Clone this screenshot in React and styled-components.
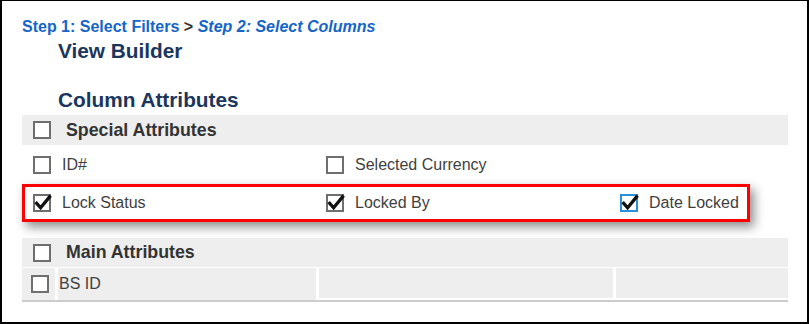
import styled, { createGlobalStyle } from "styled-components";

const GlobalStyle = createGlobalStyle`
  body {
    margin: 0;
    background: #fff;
    font-family: "Liberation Sans", Arial, sans-serif;
  }
`;

const Frame = styled.div`
  width: 809px;
  height: 324px;
  box-sizing: border-box;
  border: 2px solid #000;
  border-top-width: 1px;
  padding: 17px 0 0 20px;
  background: #fff;
`;

const Steps = styled.div`
  font-size: 16px;
  line-height: 18px;
  font-weight: bold;
  color: #1565c8;

  em {
    font-style: italic;
  }
`;

const Sep = styled.span`
  color: #333;
`;

const Heading = styled.div`
  margin: ${(p) => p.$top}px 0 0 36px;
  font-size: 20.8px;
  line-height: 24px;
  font-weight: bold;
  color: #1b365d;
`;

const Table = styled.div`
  width: 766px;
  margin-top: 3px;
`;

const Band = styled.div`
  display: flex;
  align-items: center;
  height: ${(p) => p.$h}px;
  padding-left: 11px;
  background: #eee;
`;

const BandLabel = styled.span`
  margin-left: 15px;
  font-size: 17.8px;
  font-weight: bold;
  color: #333;
`;

const Row = styled.div`
  display: grid;
  grid-template-columns: 293px 294px 1fr;
  height: 39px;
`;

const Highlight = styled(Row)`
  width: 728px;
  height: 38px;
  box-sizing: border-box;
  border: 3px solid #ff0000;
  box-shadow: 4px 5px 10px rgba(0, 0, 0, 0.45);
  margin-bottom: 16px;
`;

const Cell = styled.div`
  display: flex;
  align-items: center;
  gap: 11px;
  padding-left: ${(p) => p.$pad}px;
  font-size: 16px;
  color: #3f3f3f;
`;

const Box = styled.span`
  position: relative;
  flex-shrink: 0;
  width: 18px;
  height: 18px;
  box-sizing: border-box;
  border: 2px solid ${(p) => (p.$focus ? "#2b90d9" : "#6e6e6e")};
  background: #fff;

  svg {
    position: absolute;
    top: -2px;
    left: -2px;
  }
`;

const GridRow = styled.div`
  display: flex;
  align-items: flex-start;
  gap: 3px;
  margin-top: 1px;
  border-bottom: 2px solid #ccc;
`;

const GridCell = styled.div`
  display: flex;
  align-items: center;
  box-sizing: border-box;
  width: ${(p) => (p.$w ? `${p.$w}px` : "auto")};
  flex: ${(p) => (p.$w ? "none" : "1")};
  height: ${(p) => (p.$short ? 30 : 32)}px;
  padding-left: ${(p) => p.$pad || 0}px;
  background: #eee;
  font-size: 16px;
  color: #3f3f3f;
`;

const Checkbox = ({ checked, focus }) => (
  <Box $focus={focus}>
    {checked && (
      <svg width="21" height="20" viewBox="0 0 21 20">
        <path
          d="M2.6 8.2 L7.6 13.8 L17.6 1.6"
          fill="none"
          stroke="#111"
          strokeWidth="3.3"
          strokeLinejoin="miter"
        />
      </svg>
    )}
  </Box>
);

const Item = ({ label, checked, focus, pad = 11 }) => (
  <Cell $pad={pad}>
    <Checkbox checked={checked} focus={focus} />
    <span>{label}</span>
  </Cell>
);

export default function App() {
  return (
    <>
      <GlobalStyle />
      <Frame>
        <Steps>
          Step 1: Select Filters <Sep>&gt;</Sep> <em>Step 2: Select Columns</em>
        </Steps>
        <Heading $top={3}>View Builder</Heading>
        <Heading $top={25}>Column Attributes</Heading>
        <Table>
          <Band $h={30}>
            <Checkbox />
            <BandLabel>Special Attributes</BandLabel>
          </Band>
          <Row>
            <Item label="ID#" />
            <Item label="Selected Currency" />
            <div />
          </Row>
          <Highlight>
            <Item label="Lock Status" checked pad={8} />
            <Item label="Locked By" checked pad={8} />
            <Item label="Date Locked" checked focus pad={8} />
          </Highlight>
          <Band $h={29}>
            <Checkbox />
            <BandLabel>Main Attributes</BandLabel>
          </Band>
          <GridRow>
            <GridCell $w={33} $pad={9}>
              <Checkbox />
            </GridCell>
            <GridCell $w={258} $pad={1}>
              BS ID
            </GridCell>
            <GridCell $w={294} $short />
            <GridCell $short />
          </GridRow>
        </Table>
      </Frame>
    </>
  );
}
